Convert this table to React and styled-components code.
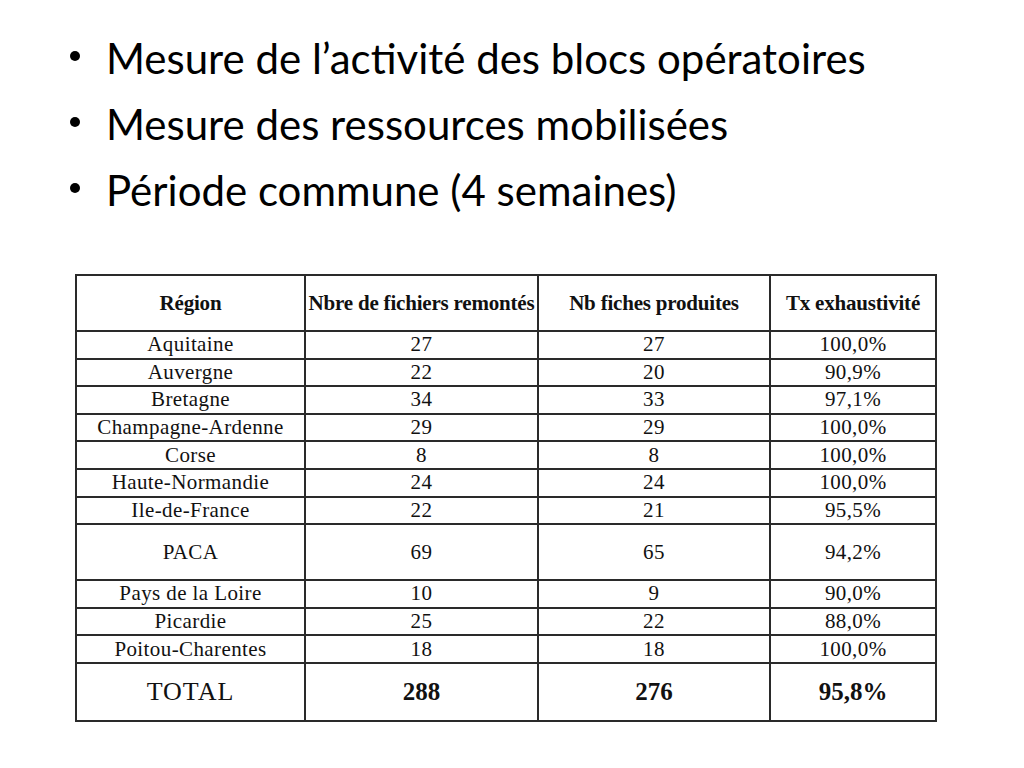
import styled, { createGlobalStyle } from 'styled-components';

const GlobalStyle = createGlobalStyle`
  html, body {
    margin: 0;
    padding: 0;
    background: #ffffff;
  }
`;

const Slide = styled.div`
  width: 1024px;
  height: 768px;
  box-sizing: border-box;
  padding: 25px 0 0 0;
  display: flex;
  flex-direction: column;
`;

const BulletList = styled.ul`
  list-style: none;
  margin: 0;
  padding: 0 0 0 106px;
  font-family: Lato, 'Open Sans', sans-serif;
  font-size: 42px;
  line-height: 66px;
  color: #000;
`;

const Bullet = styled.li`
  position: relative;

  &::before {
    content: '';
    position: absolute;
    left: -36px;
    top: 26px;
    width: 10px;
    height: 10px;
    border-radius: 50%;
    background: #000;
  }
`;

const TableWrap = styled.div`
  margin: 51px 0 0 75px;
`;

const Table = styled.table`
  border-collapse: collapse;
  font-family: 'Liberation Serif', 'Times New Roman', serif;
  color: #111;
  table-layout: fixed;
  width: 860px;
`;

const Cell = styled.td`
  border: 2px solid #2a2a2a;
  text-align: center;
  vertical-align: middle;
  padding: 0;
  height: ${p => p.$h}px;
  font-size: ${p => p.$size || 21}px;
  font-weight: ${p => (p.$bold ? 700 : 400)};
  letter-spacing: ${p => p.$track ?? 0.4}px;
  line-height: 1;
  white-space: nowrap;
  overflow: hidden;
`;

const HeadCell = styled(Cell).attrs({ as: 'th' })`
  font-size: 21px;
  font-weight: 700;
  letter-spacing: -0.2px;
`;

const columns = [229, 233, 232, 166];

const rows = [
  ['Aquitaine', '27', '27', '100,0%'],
  ['Auvergne', '22', '20', '90,9%'],
  ['Bretagne', '34', '33', '97,1%'],
  ['Champagne-Ardenne', '29', '29', '100,0%'],
  ['Corse', '8', '8', '100,0%'],
  ['Haute-Normandie', '24', '24', '100,0%'],
  ['Ile-de-France', '22', '21', '95,5%'],
  ['PACA', '69', '65', '94,2%', 54],
  ['Pays de la Loire', '10', '9', '90,0%'],
  ['Picardie', '25', '22', '88,0%'],
  ['Poitou-Charentes', '18', '18', '100,0%'],
];

const App = () => {
  return (
    <>
      <GlobalStyle />
      <Slide>
        <BulletList>
          <Bullet>Mesure de l’activité des blocs opératoires</Bullet>
          <Bullet>Mesure des ressources mobilisées</Bullet>
          <Bullet>Période commune (4 semaines)</Bullet>
        </BulletList>
        <TableWrap>
          <Table>
            <colgroup>
              {columns.map((w, i) => (
                <col key={i} style={{ width: w }} />
              ))}
            </colgroup>
            <thead>
              <tr>
                <HeadCell $h={54}>Région</HeadCell>
                <HeadCell $h={54}>Nbre de fichiers remontés</HeadCell>
                <HeadCell $h={54}>Nb fiches produites</HeadCell>
                <HeadCell $h={54}>Tx exhaustivité</HeadCell>
              </tr>
            </thead>
            <tbody>
              {rows.map(([region, files, sheets, rate, h]) => (
                <tr key={region}>
                  <Cell $h={h || 25.6}>{region}</Cell>
                  <Cell $h={h || 25.6}>{files}</Cell>
                  <Cell $h={h || 25.6}>{sheets}</Cell>
                  <Cell $h={h || 25.6}>{rate}</Cell>
                </tr>
              ))}
              <tr>
                <Cell $h={56} $size={26} $track={1}>TOTAL</Cell>
                <Cell $h={56} $size={25} $track={0} $bold>288</Cell>
                <Cell $h={56} $size={25} $track={0} $bold>276</Cell>
                <Cell $h={56} $size={25} $track={0} $bold>95,8%</Cell>
              </tr>
            </tbody>
          </Table>
        </TableWrap>
      </Slide>
    </>
  );
};

export default App;
